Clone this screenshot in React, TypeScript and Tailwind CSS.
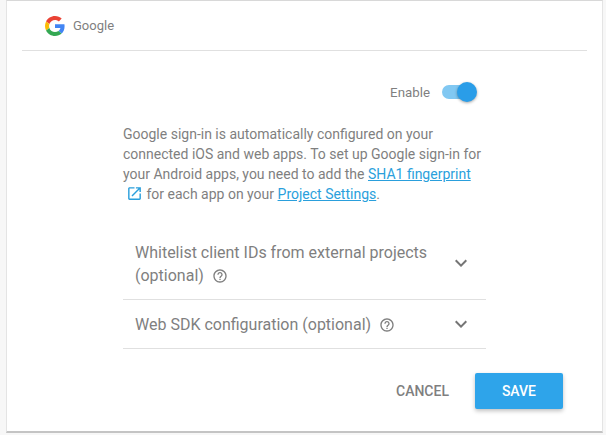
import React from "react";

function GoogleG() {
  return (
    <svg width="20" height="20" viewBox="0 0 48 48" className="shrink-0">
      <path fill="#EA4335" d="M24 9.5c3.54 0 6.71 1.22 9.21 3.6l6.85-6.85C35.9 2.38 30.47 0 24 0 14.62 0 6.51 5.38 2.56 13.22l7.98 6.19C12.43 13.72 17.74 9.5 24 9.5z" />
      <path fill="#4285F4" d="M46.98 24.55c0-1.57-.15-3.09-.38-4.55H24v9.02h12.94c-.58 2.96-2.26 5.48-4.78 7.18l7.73 6c4.51-4.18 7.09-10.36 7.09-17.65z" />
      <path fill="#FBBC05" d="M10.53 28.59c-.48-1.45-.76-2.99-.76-4.59s.27-3.14.76-4.59l-7.98-6.19C.92 16.46 0 20.12 0 24c0 3.88.92 7.54 2.56 10.78l7.97-6.19z" />
      <path fill="#34A853" d="M24 48c6.48 0 11.93-2.13 15.89-5.81l-7.73-6c-2.15 1.45-4.92 2.3-8.16 2.3-6.26 0-11.57-4.22-13.47-9.91l-7.98 6.19C6.51 42.62 14.62 48 24 48z" />
    </svg>
  );
}

function Help() {
  return (
    <svg width="16" height="16" viewBox="0 0 24 24" fill="#7f7f7f" className="inline-block shrink-0">
      <path d="M11 18h2v-2h-2v2zm1-16C6.48 2 2 6.48 2 12s4.48 10 10 10 10-4.48 10-10S17.52 2 12 2zm0 18c-4.41 0-8-3.59-8-8s3.59-8 8-8 8 3.59 8 8-3.59 8-8 8zm0-14c-2.21 0-4 1.79-4 4h2c0-1.1.9-2 2-2s2 .9 2 2c0 2-3 1.75-3 5h2c0-2.25 3-2.5 3-5 0-2.21-1.79-4-4-4z" />
    </svg>
  );
}

function Chevron() {
  return (
    <svg width="24" height="24" viewBox="0 0 24 24" fill="#757575" className="shrink-0">
      <path d="M16.59 8.59 12 13.17 7.41 8.59 6 10l6 6 6-6z" />
    </svg>
  );
}

function Launch() {
  return (
    <svg width="17" height="17" viewBox="0 0 24 24" fill="#2a9fdc" className="inline-block align-[-3px]">
      <path d="M19 19H5V5h7V3H5c-1.11 0-2 .9-2 2v14c0 1.1.89 2 2 2h14c1.1 0 2-.9 2-2v-7h-2v7zM14 3v2h3.59l-9.83 9.83 1.41 1.41L19 6.41V10h2V3h-7z" />
    </svg>
  );
}

export default function App() {
  return (
    <div className="h-[435px] w-[606px] overflow-hidden bg-[#f7f7f7] pl-[6px] pr-[3px] font-['Roboto',sans-serif]">
      <div className="h-[433px] border-x border-t border-x-[#e4e4e4] border-t-[#d8d8d8] border-b-2 border-b-[#c4c4c4] bg-white">
        <div className="ml-[15px] mr-[15px] flex h-[50px] items-center gap-2 border-b border-[#e0e0e0] pl-[23px]">
          <GoogleG />
          <span className="text-[13px] text-[#7f7f7f]">Google</span>
        </div>
        <div className="ml-[116px] w-[363px]">
          <div className="mt-[27px] flex h-[30px] items-center justify-end gap-[12px] pr-[10px]">
            <span className="text-[13.3px] text-[#7f7f7f]">Enable</span>
            <div className="relative -top-[1px] h-[14px] w-[34px] rounded-full bg-[#81c8f2]">
              <div className="absolute -top-[3px] right-[-1px] h-5 w-5 rounded-full bg-[#2a9de8] shadow-[0_1px_3px_rgba(0,0,0,0.35)]" />
            </div>
          </div>
          <p className="mt-[16px] text-[14px] leading-[20px] text-[#7f7f7f]">
            Google sign-in is automatically configured on your connected iOS and web apps. To set up Google sign-in for your Android apps, you need to add the{" "}
            <span className="text-[#2a9fdc] underline">SHA1 fingerprint</span>
            <br />
            <span className="ml-[3px]"><Launch /></span> for each app on your{" "}
            <span className="text-[#2a9fdc] underline">Project Settings</span>.
          </p>
          <div className="mt-[22px]">
            <div className="flex h-[74px] items-center justify-between border-b border-[#e0e0e0] pl-[12px] pr-[13px]">
              <div className="mt-[3px] w-[300px] text-[16px] leading-[23px] text-[#7f7f7f]">
                Whitelist client IDs from external projects
                <br />
                <span className="inline-flex items-center gap-[8px]">(optional) <Help /></span>
              </div>
              <Chevron />
            </div>
            <div className="flex h-[49px] items-center justify-between border-b border-[#e0e0e0] pl-[12px] pr-[13px]">
              <div className="mt-[2px] flex items-center gap-[8px] text-[16px] leading-[24px] text-[#7f7f7f]">
                Web SDK configuration (optional) <Help />
              </div>
              <Chevron />
            </div>
          </div>
        </div>
        <div className="mt-[24px] ml-[389px] flex items-center gap-[26px]">
          <span className="text-[14px] font-medium text-[#7f7f7f]">CANCEL</span>
          <div className="flex h-9 w-[88px] items-center justify-center rounded-[2px] bg-[#2ea4ea] text-[14px] font-medium text-white shadow-[0_2px_4px_rgba(0,0,0,0.25)]">SAVE</div>
        </div>
      </div>
    </div>
  );
}
